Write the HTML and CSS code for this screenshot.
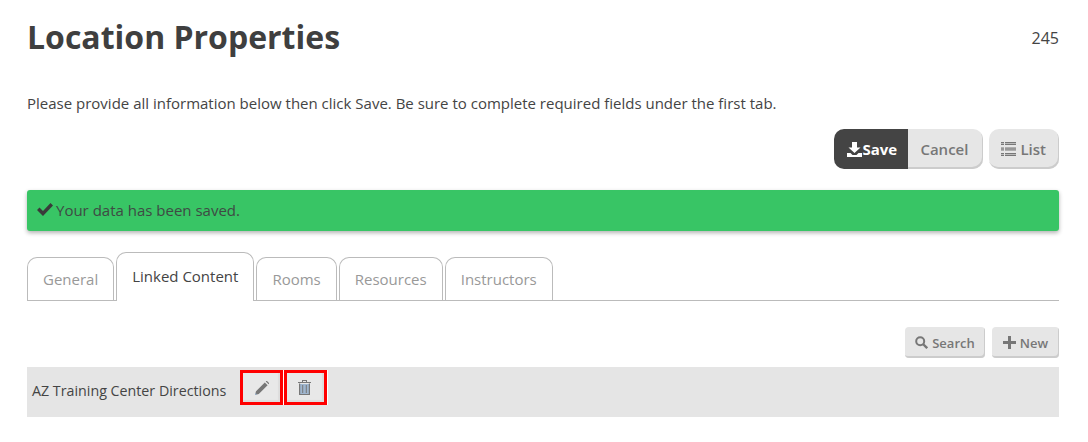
FILE: index.html
```html
<!DOCTYPE html>
<html lang="en">
<head>
  <meta charset="UTF-8" />
  <title>Location Properties</title>
  <link rel="stylesheet" href="styles.css">
</head>
<body>

  <header class="page-head">
    <h1>Location Properties</h1>
    <span class="record-id">245</span>
  </header>

  <p class="intro">Please provide all information below then click Save. Be sure to complete required fields under the first tab.</p>

  <div class="toolbar">
    <div class="btn-group">
      <button class="btn btn-save">
        <svg class="icon" width="15" height="15" viewBox="0 0 15 15"><path fill="#fff" d="M5 0h5v5.500h3.500L7.500 11 1.500 5.500H5zM0 11h3.500l2 2h4l2-2H15v4H0z"/></svg>Save
      </button>
      <button class="btn btn-cancel">Cancel</button>
    </div>
    <button class="btn btn-list">
      <svg class="icon" width="15" height="14" viewBox="0 0 15 14"><path fill="#777" d="M0 0h3v3H0zM4 0h11v3H4zM0 5.500h3v3H0zM4 5.500h11v3H4zM0 11h3v3H0zM4 11h11v3H4z"/><path stroke="#e6e6e6" stroke-width=".6" d="M0 1.500h15M0 7h15M0 12.500h15"/></svg>List
    </button>
  </div>

  <div class="alert">
    <svg class="icon" width="16" height="13" viewBox="0 0 16 13"><path fill="#3a3a3a" d="M0 7l2.500-2.500L6 8l7.500-8L16 2.500 6 13z"/></svg>Your data has been saved.
  </div>

  <ul class="tabs">
    <li class="tab">General</li>
    <li class="tab active">Linked Content</li>
    <li class="tab">Rooms</li>
    <li class="tab">Resources</li>
    <li class="tab">Instructors</li>
  </ul>

  <div class="actions">
    <button class="btn-small btn-search">
      <svg class="icon" width="13" height="13" viewBox="0 0 13 13"><circle cx="5.200" cy="5.200" r="4" fill="none" stroke="#777" stroke-width="2"/><path stroke="#777" stroke-width="2.400" d="M8 8l4.200 4.200"/></svg>Search
    </button>
    <button class="btn-small">
      <svg class="icon" width="13" height="13" viewBox="0 0 13 13"><path fill="#777" d="M5 0h3v5h5v3H8v5H5V8H0V5h5z"/></svg>New
    </button>
  </div>

  <div class="row">
    <span class="row-name">AZ Training Center Directions</span>
    <button class="row-btn">
      <svg width="14" height="14" viewBox="0 0 14 14"><path fill="#777" d="M0 14l1-3.800L9.800 1.400l2.800 2.800L3.800 13zM10.800.4l.4-.4h.8l2 2v.8l-.4.4z"/><path fill="#9db8d6" d="M0 14l.5-2 1.500 1.500z"/></svg>
    </button>
    <button class="row-btn row-btn-trash">
      <svg width="13" height="15" viewBox="0 0 13 15"><path fill="#9fb6cf" d="M1.500 4h10v11h-10z"/><path fill="#777" d="M0 2h4V0h5v2h4v1H0zM5 1v1h3V1zM1 3.500h1.200V15H1zM10.800 3.500H12V15h-1.200zM1 14h11v1H1zM4.200 5h1v8h-1zM7.800 5h1v8h-1z"/></svg>
    </button>
  </div>

</body>
</html>
```

FILE: styles.css
```css
body {
  margin: 0;
  padding: 0 29px 0 27px;
  background: #fff;
  color: #444;
  font-family: "Open Sans", sans-serif;
  font-size: 15px;
}

.icon {
  flex: none;
}

.page-head {
  display: flex;
  justify-content: space-between;
  height: 76px;
  padding-top: 16px;
  box-sizing: border-box;
}

h1 {
  margin: 0;
  font-size: 32px;
  line-height: 42px;
  font-weight: 700;
  color: #3f3f3f;
}

.record-id {
  font-size: 16px;
  line-height: 22px;
  margin: 11px 0 0;
}

.intro {
  margin: 18px 0 0;
  line-height: 19px;
}

.toolbar {
  display: flex;
  justify-content: flex-end;
  gap: 6px;
  margin-top: 16px;
}

.btn-group {
  display: flex;
}

/* Le bord du bas est une ombre interne pour suivre les coins arrondis */
.btn {
  display: flex;
  align-items: center;
  height: 40px;
  padding: 0 13px 0 12px;
  border: 0;
  border-radius: 10px;
  background: #e6e6e6;
  box-shadow: inset -1px -2px 0 #ccc;
  color: #777;
  font: 600 15px "Open Sans", sans-serif;
}

.btn-save {
  width: 74px;
  padding: 0 0 0 13px;
  background: #444;
  box-shadow: none;
  color: #fff;
  font-weight: 700;
  border-radius: 10px 0 0 10px;
}

.btn-cancel {
  padding-left: 12px;
  padding-right: 15px;
  border-radius: 0 10px 10px 0;
}

.btn-list .icon {
  margin-right: 4px;
}

.alert {
  display: flex;
  align-items: center;
  gap: 3px;
  box-sizing: border-box;
  height: 41px;
  margin-top: 21px;
  padding: 0 0 2px 10px;
  background: #38c565;
  border-radius: 3px;
  box-shadow: 0 2px 4px rgba(0, 0, 0, 0.3);
  color: #3f4a44;
}

.tabs {
  display: flex;
  align-items: flex-end;
  gap: 2px;
  margin: 21px 0 0;
  padding: 0;
  list-style: none;
  border-bottom: 1px solid #bbb;
}

.tab {
  height: 42px;
  padding: 0 15px;
  border: 1px solid #bbb;
  border-bottom: 0;
  border-radius: 10px 10px 0 0;
  color: #999;
  line-height: 42px;
}

.tab.active {
  height: 48px;
  margin-bottom: -1px;
  background: #fff;
  color: #444;
  line-height: 47px;
}

.actions {
  display: flex;
  justify-content: flex-end;
  gap: 7px;
  margin-top: 26px;
}

.btn-small {
  display: flex;
  align-items: center;
  gap: 4px;
  height: 31px;
  padding: 0 11px;
  border: 0;
  border-radius: 4px;
  background: #e6e6e6;
  box-shadow: inset -1px -2px 0 #ccc;
  color: #777;
  font: 600 13px "Open Sans", sans-serif;
}

.btn-search {
  padding: 0 10px;
}

.row {
  display: flex;
  align-items: flex-start;
  height: 50px;
  margin-top: 9px;
  padding-left: 5px;
  background: #e5e5e5;
}

.row-name {
  width: 208px;
  margin-top: 14px;
  font-size: 14.25px;
}

.row-btn {
  display: flex;
  align-items: center;
  justify-content: center;
  width: 43px;
  height: 35px;
  margin: 3px 1px 0 0;
  padding: 0;
  border: 3px solid #f00;
  background: #e8e8e8;
  box-shadow: 1px 0 0 #fff, inset -2px -2px 1px #ddd;
}

.row-btn-trash {
  padding-right: 2px;
}
```
